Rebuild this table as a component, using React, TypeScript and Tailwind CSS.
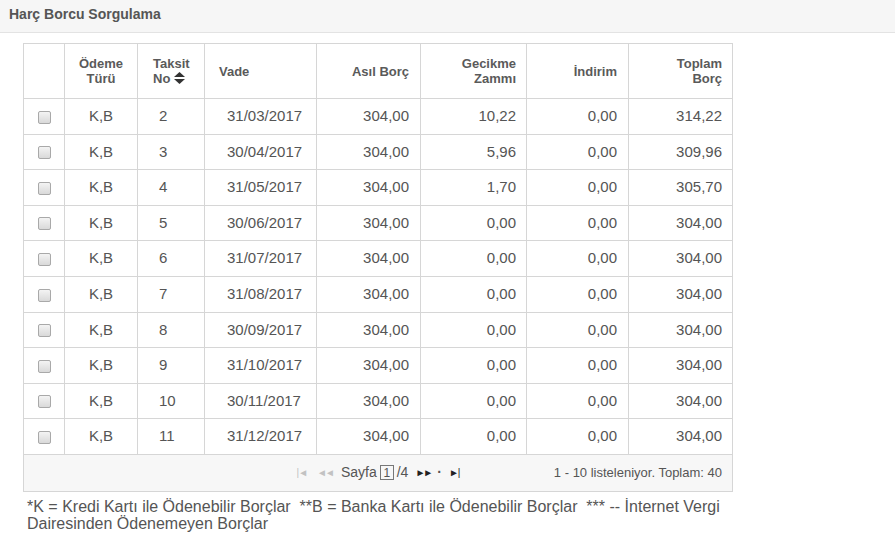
import type { ReactNode } from "react";

const rows = [
  { no: 2, vade: "31/03/2017", gecikme: "10,22", toplam: "314,22" },
  { no: 3, vade: "30/04/2017", gecikme: "5,96", toplam: "309,96" },
  { no: 4, vade: "31/05/2017", gecikme: "1,70", toplam: "305,70" },
  { no: 5, vade: "30/06/2017", gecikme: "0,00", toplam: "304,00" },
  { no: 6, vade: "31/07/2017", gecikme: "0,00", toplam: "304,00" },
  { no: 7, vade: "31/08/2017", gecikme: "0,00", toplam: "304,00" },
  { no: 8, vade: "30/09/2017", gecikme: "0,00", toplam: "304,00" },
  { no: 9, vade: "31/10/2017", gecikme: "0,00", toplam: "304,00" },
  { no: 10, vade: "30/11/2017", gecikme: "0,00", toplam: "304,00" },
  { no: 11, vade: "31/12/2017", gecikme: "0,00", toplam: "304,00" },
];

const font = { fontFamily: '"Liberation Sans", Arial, sans-serif' };

function Th({ children, className = "" }: { children: ReactNode; className?: string }) {
  return (
    <th className={`border border-[#d6d6d6] px-0 text-[13px] font-bold leading-[15px] text-[#5a5a5a] ${className}`}>
      {children}
    </th>
  );
}

function Td({ children, className = "" }: { children: ReactNode; className?: string }) {
  return <td className={`border border-[#d6d6d6] p-0 text-[15px] text-[#555] ${className}`}>{children}</td>;
}

function Checkbox() {
  return (
    <span className="inline-block h-[13px] w-[13px] rounded-[2px] border border-[#a9a9a9] bg-gradient-to-b from-[#f4f4f4] to-[#d9d9d9] align-middle" />
  );
}

function SortIcon() {
  return (
    <svg width="11" height="12" viewBox="0 0 11 12" className="ml-[4px] inline-block align-[-1px]">
      <path d="M5.5 0 L11 5 H0 Z" fill="#333" />
      <path d="M5.5 12 L11 7 H0 Z" fill="#333" />
    </svg>
  );
}

export default function App() {
  return (
    <div className="h-[555px] w-[895px] bg-white" style={font}>
      <div className="flex h-[33px] items-center border-b border-[#e3e3e3] bg-[#f6f6f6] px-[9px] pb-[3px]">
        <span className="text-[14px] font-bold text-[#555]">Harç Borcu Sorgulama</span>
      </div>

      <div className="pl-[23px] pt-[10px]">
        <table className="w-[709px] table-fixed border-collapse">
          <colgroup>
            <col className="w-[41px]" />
            <col className="w-[73px]" />
            <col className="w-[67px]" />
            <col className="w-[112px]" />
            <col className="w-[104px]" />
            <col className="w-[106px]" />
            <col className="w-[102px]" />
            <col className="w-[104px]" />
          </colgroup>
          <thead>
            <tr className="h-[55px]">
              <Th> </Th>
              <Th className="text-center">
                Ödeme
                <br />
                Türü
              </Th>
              <Th className="pl-[15px] text-left">
                Taksit
                <br />
                No
                <SortIcon />
              </Th>
              <Th className="pl-[14px] text-left">Vade</Th>
              <Th className="pr-[11px] text-right">Asıl Borç</Th>
              <Th className="pr-[10px] text-right">
                Gecikme
                <br />
                Zammı
              </Th>
              <Th className="pr-[11px] text-right">İndirim</Th>
              <Th className="pr-[10px] text-right">
                Toplam
                <br />
                Borç
              </Th>
            </tr>
          </thead>
          <tbody>
            {rows.map((r) => (
              <tr key={r.no} className="h-[35.6px]">
                <Td className="text-center">
                  <Checkbox />
                </Td>
                <Td className="text-center">K,B</Td>
                <Td className="pl-[21px]">{r.no}</Td>
                <Td className="pl-[22px]">{r.vade}</Td>
                <Td className="pr-[11px] text-right">304,00</Td>
                <Td className="pr-[10px] text-right">{r.gecikme}</Td>
                <Td className="pr-[11px] text-right">0,00</Td>
                <Td className="pr-[10px] text-right">{r.toplam}</Td>
              </tr>
            ))}
            <tr className="h-[37px] bg-[#f7f7f7]">
              <td colSpan={8} className="border border-[#d6d6d6] p-0">
                <div className="relative flex items-center px-[10px] text-[#555]">
                  <div className="flex flex-1 items-center justify-center text-[14px]">
                    <span className="mr-[10px] text-[10px] tracking-[-1px] text-[#c2c2c2]">|◄</span>
                    <span className="mr-[8px] text-[10px] tracking-[-2px] text-[#c2c2c2]">◄◄</span>
                    <span>Sayfa</span>
                    <span className="ml-[3px] inline-flex h-[15px] w-[14px] items-center justify-center border border-[#777] text-[12px] leading-none">
                      1
                    </span>
                    <span className="ml-[3px]">/4</span>
                    <span className="ml-[7px] text-[10px] tracking-[-2px] text-[#222]">►►</span>
                    <span className="ml-[6px] font-bold text-[#555]">·</span>
                    <span className="ml-[7px] text-[10px] tracking-[-1px] text-[#222]">►|</span>
                  </div>
                  <span className="absolute right-[10px] text-[13px]">1 - 10 listeleniyor. Toplam: 40</span>
                </div>
              </td>
            </tr>
          </tbody>
        </table>
        <p className="mt-[6px] w-[712px] pl-[4px] text-[16px] leading-[17px] text-[#555]">
          *K = Kredi Kartı ile Ödenebilir Borçlar &nbsp;**B = Banka Kartı ile Ödenebilir Borçlar &nbsp;*** -- İnternet Vergi Dairesinden Ödenemeyen Borçlar
        </p>
      </div>
    </div>
  );
}
